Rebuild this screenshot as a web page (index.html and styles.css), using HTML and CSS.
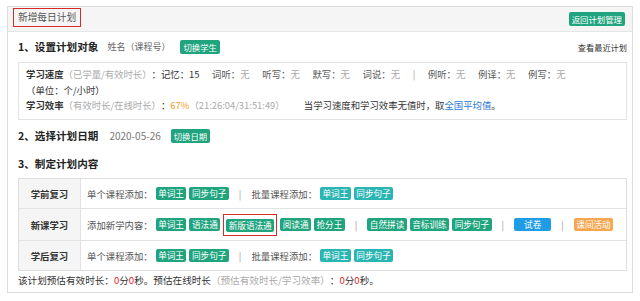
FILE: index.html
```html
<!DOCTYPE html>
<html lang="zh-CN">
<head>
<meta charset="utf-8">
<title>新增每日计划</title>
<link rel="stylesheet" href="styles.css">
</head>
<body>
<div class="panel">
  <div class="panel-head">
    <div class="title">新增每日计划</div>
    <span class="btn">返回计划管理</span>
  </div>
  <div class="panel-body">
    <div class="sec-row">
      <h3 class="sec-title">1、设置计划对象</h3>
      <span class="sub">姓名（课程号）</span>
      <span class="btn btn-gap">切换学生</span>
      <span class="link-right">查看最近计划</span>
    </div>
    <div class="info">
      <div class="line">
        <b>学习速度</b><span class="muted">（已学量/有效时长）</span><span>：记忆：15</span>
        <span class="item">词听：<i>无</i></span>
        <span class="item">听写：<i>无</i></span>
        <span class="item">默写：<i>无</i></span>
        <span class="item">词说：<i>无</i></span>
        <span class="vsep">|</span>
        <span class="item">例听：<i>无</i></span>
        <span class="item">例译：<i>无</i></span>
        <span class="item">例写：<i>无</i></span>
      </div>
      <div class="line">（单位：个/小时）</div>
      <div class="line">
        <b>学习效率</b><span class="muted">（有效时长/在线时长）</span><span>：</span><span class="orange">67%</span><span class="muted">（21:26:04/31:51:49）</span>
        <span class="note">当学习速度和学习效率无值时，取<span class="blue">全国平均值</span>。</span>
      </div>
    </div>
    <div class="sec-row sec2">
      <h3 class="sec-title">2、选择计划日期</h3>
      <span class="date">2020-05-26</span>
      <span class="btn btn-gap2">切换日期</span>
    </div>
    <div class="sec-row sec3">
      <h3 class="sec-title">3、制定计划内容</h3>
    </div>
    <div class="table">
      <div class="trow r1">
        <div class="label">学前复习</div>
        <div class="cell">
          <span>单个课程添加：</span>
          <span class="tag">单词王</span>
          <span class="tag">同步句子</span>
          <span class="sep">|</span>
          <span>批量课程添加：</span>
          <span class="tag cyan">单词王</span>
          <span class="tag cyan">同步句子</span>
        </div>
      </div>
      <div class="trow r2">
        <div class="label">新课学习</div>
        <div class="cell">
          <span>添加新学内容：</span>
          <span class="tag">单词王</span>
          <span class="tag">语法通</span>
          <span class="hl"><span class="tag">新版语法通</span></span>
          <span class="tag">阅读通</span>
          <span class="tag">抢分王</span>
          <span class="sep">|</span>
          <span class="tag">自然拼读</span>
          <span class="tag">音标训练</span>
          <span class="tag">同步句子</span>
          <span class="sep">|</span>
          <span class="tag blue-tag">试卷</span>
          <span class="sep">|</span>
          <span class="tag orange-tag">课间活动</span>
        </div>
      </div>
      <div class="trow r3">
        <div class="label">学后复习</div>
        <div class="cell">
          <span>单个课程添加：</span>
          <span class="tag">单词王</span>
          <span class="tag">同步句子</span>
          <span class="sep">|</span>
          <span>批量课程添加：</span>
          <span class="tag cyan">单词王</span>
          <span class="tag cyan">同步句子</span>
        </div>
      </div>
    </div>
    <div class="foot">该计划预估有效时长：<span class="red">0</span>分<span class="red">0</span>秒。预估在线时长<span class="muted">（预估有效时长/学习效率）</span>：<span class="red">0</span>分<span class="red">0</span>秒。</div>
  </div>
</div>
</body>
</html>
```
FILE: styles.css
```css
body {
  margin: 0;
  background: #fff;
  color: #333;
  font-family: "Noto Sans CJK SC", "Noto Sans", sans-serif;
  font-size: 9.4px;
  text-spacing-trim: space-all;
}

.panel {
  margin: 6px 7px 0 7px;
  height: 287px;
  box-sizing: border-box;
  border: 1px solid #dcdcdc;
}

.panel-head {
  height: 24px;
  background: #f5f5f5;
  border-bottom: 1px solid #e6e6e6;
  display: flex;
  align-items: center;
  justify-content: space-between;
  padding: 0 7px 0 5px;
}

.title {
  align-self: flex-start;
  margin-top: 1px;
  height: 19px;
  box-sizing: border-box;
  border: 1px solid #d52b2b;
  padding: 0 4px;
  line-height: 17px;
  font-size: 9.7px;
  color: #555;
}

.btn {
  display: inline-block;
  height: 14px;
  line-height: 14px;
  padding: 0 3px;
  border-radius: 2px;
  background: #1fa47e;
  color: #fff;
  font-size: 8.4px;
}

.panel-body {
  padding: 0 5px 0 10px;
}

.sec-row {
  display: flex;
  align-items: center;
  height: 15px;
  margin-top: 7px;
}

.sec2 { margin-top: 8px; }
.sec3 { margin-top: 13px; }

.sec-title {
  margin: 0;
  font-size: 10.6px;
  font-weight: bold;
  line-height: 15px;
  color: #222;
}

.sub {
  margin-left: 9px;
  font-size: 9px;
  color: #666;
}

.btn-gap { margin-left: 10px; }
.btn-gap2 { margin-left: 10px; }

.date {
  margin-left: 11px;
  font-size: 10px;
  color: #777;
}

.link-right {
  margin-left: auto;
  font-size: 8.2px;
  color: #333;
}

.info {
  margin-top: 8px;
  height: 58px;
  box-sizing: border-box;
  border: 1px solid #e2e2e2;
  padding: 4px 0 0 7px;
  line-height: 15.5px;
}

.line {
  white-space: nowrap;
}

.line b {
  font-weight: bold;
  color: #333;
}

.muted { color: #aaa; }

.item {
  margin-left: 10.5px;
  color: #555;
}

.item i {
  font-style: normal;
  color: #aaa;
}

.vsep {
  margin-left: 10.5px;
  color: #999;
}

.orange { color: #f39c1f; }

.note {
  margin-left: 17px;
  color: #333;
}

.blue { color: #2a78d2; }

.table {
  margin-top: 7px;
  border: 1px solid #dedede;
}

.trow {
  display: grid;
  grid-template-columns: 62px 1fr;
  border-bottom: 1px solid #e2e2e2;
}

.trow:last-child { border-bottom: none; }

.r1 { height: 29px; }
.r2 { height: 31px; }
.r3 { height: 29px; }

.label {
  display: flex;
  align-items: center;
  justify-content: center;
  background: #f5f5f5;
  border-right: 1px solid #e2e2e2;
  font-weight: bold;
  color: #333;
}

.cell {
  display: flex;
  align-items: center;
  gap: 3px;
  padding-left: 6px;
  color: #555;
  white-space: nowrap;
}

.tag {
  display: inline-block;
  height: 13px;
  line-height: 13px;
  padding: 0 2.5px;
  border-radius: 2px;
  background: #1fa47e;
  color: #fff;
  font-size: 8.6px;
}

.tag.cyan { background: #2ab5b3; }
.tag.blue-tag { background: #1e9de6; padding: 0 10px; }
.tag.orange-tag { background: #f6a64f; padding: 0 2.5px; }

.hl {
  display: inline-flex;
  border: 1px solid #d52b2b;
  padding: 4px 2px 3px;
}

.sep {
  margin: 0 7px;
  color: #999;
}

.foot {
  margin-top: 2px;
  line-height: 15px;
  font-size: 9.6px;
  color: #333;
  white-space: nowrap;
}

.red { color: #e8262b; }
```
